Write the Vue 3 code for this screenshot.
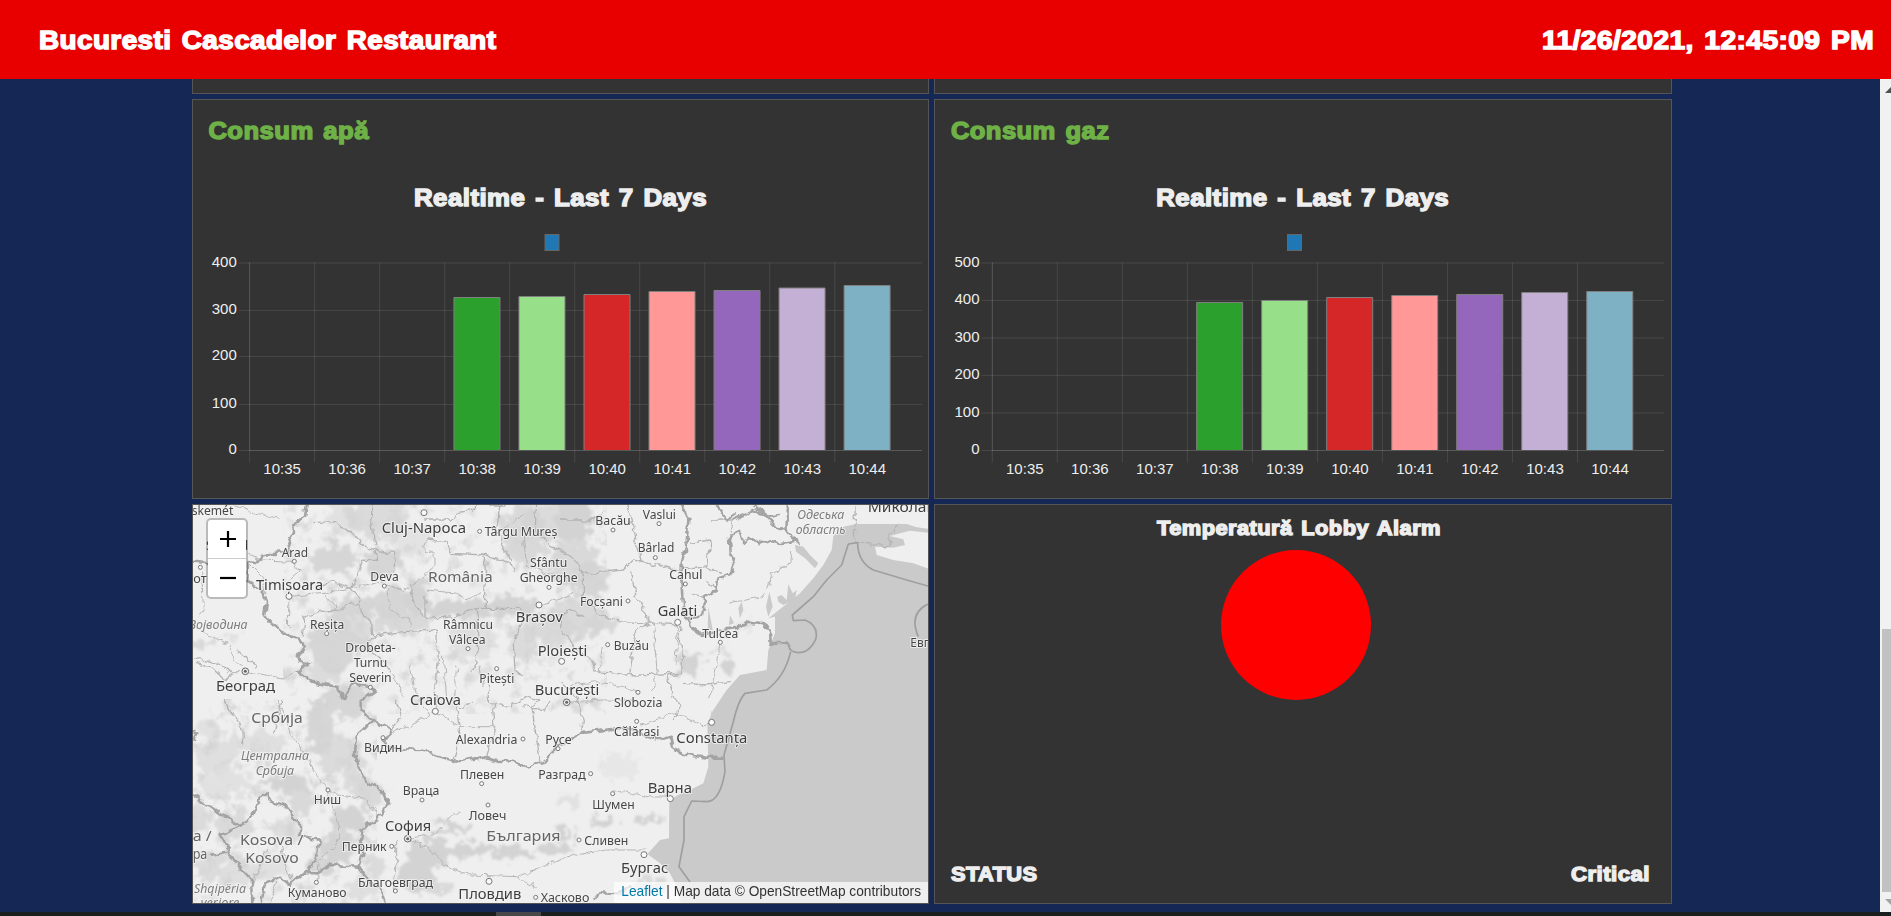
<script setup>
const palette = ['#2ca02c', '#98df8a', '#d62728', '#ff9896', '#9467bd', '#c5b0d5', '#7fb1c5']
const times = ['10:35', '10:36', '10:37', '10:38', '10:39', '10:40', '10:41', '10:42', '10:43', '10:44']

const charts = [
  {
    title: 'Consum apă', titleX: 15.4, titleW: 160.5, width: 735, axis: 56.6, end: 729, headX: 221, legend: 352,
    ticks: [['400', 163], ['300', 210.4], ['200', 256.4], ['100', 304.4], ['0', 350.5]],
    tops: [197.5, 196.5, 194.5, 191.5, 190.5, 188, 185.5]
  },
  {
    title: 'Consum gaz', titleX: 15.9, titleW: 158.5, width: 736, axis: 57.3, end: 729, headX: 221.2, legend: 352.5,
    ticks: [['500', 163], ['400', 200.4], ['300', 238], ['200', 275.4], ['100', 313], ['0', 350.5]],
    tops: [202.5, 200.5, 197.5, 195.5, 194.5, 192.5, 191.5]
  }
]
const step = 65.02

// label, left, right, baseline, style (s = town, l = city, c = country, i = region)
const labels = [
  ['skemét', 5, 130, 46, 's'], ['Szeged', 48, 175, 150, 's'], ['Arad', 275, 354, 170, 's'], ['Timișoara', 198, 400, 270, 'l'],
  ['от', 10, 50, 249, 's'], ['Војводина', -4, 173, 387, 'i'], ['Deva', 541, 626, 243, 's'], ['România', 714, 908, 247, 'c'],
  ['Reșița', 360, 463, 387, 's'], ['Cluj-Napoca', 575, 828, 100, 'l'], ['Târgu Mureș', 884, 1102, 108, 's'],
  ['Sfântu', 1020, 1132, 200, 's'], ['Gheorghe', 989, 1163, 245, 's'], ['Brașov', 977, 1118, 367, 'l'],
  ['Râmnicu', 759, 909, 387, 's'], ['Vâlcea', 777, 887, 431, 's'], ['Drobeta-', 466, 617, 456, 's'], ['Turnu', 491, 592, 501, 's'],
  ['Severin', 478, 605, 546, 's'], ['Београд', 78, 255, 572, 'l'], ['Pitești', 868, 973, 549, 's'], ['Craiova', 660, 813, 616, 'l'],
  ['Ploiești', 1043, 1192, 467, 'l'], ['București', 1034, 1228, 585, 'l'], ['Bacău', 1216, 1322, 76, 's'], ['Vaslui', 1358, 1458, 56, 's'],
  ['Bârlad', 1343, 1453, 157, 's'], ['Cahul', 1438, 1537, 237, 's'], ['Focșani', 1170, 1299, 317, 's'], ['Galați', 1403, 1522, 348, 'l'],
  ['Tulcea', 1537, 1645, 415, 's'], ['Buzău', 1271, 1377, 450, 's'], ['Slobozia', 1272, 1417, 621, 's'], ['Одеська', 1822, 1963, 56, 'i'],
  ['область', 1817, 1967, 101, 'i'], ['Миколаїв', 2033, 2248, 36, 'l'], ['Евпатория', 2161, 2345, 440, 's'], ['Србија', 184, 338, 670, 'c'],
  ['Централна', 153, 357, 781, 'i'], ['Србија', 197, 312, 826, 'i'], ['Ниш', 371, 453, 912, 's'], ['Kosova /', 150, 340, 1035, 'c'],
  ['Kosovo', 166, 326, 1090, 'c'], ['a /', 8, 65, 1022, 'c'], ['ра', 8, 52, 1078, 'c'], ['Shqipëria', 12, 168, 1178, 'i'],
  ['veriore', 32, 148, 1222, 'i'], ['Куманово', 293, 470, 1190, 's'], ['Видин', 522, 637, 757, 's'], ['Alexandria', 797, 982, 732, 's'],
  ['Русе', 1066, 1145, 732, 's'], ['Плевен', 810, 943, 837, 's'], ['Разград', 1045, 1187, 837, 's'], ['Враца', 638, 748, 884, 's'],
  ['Ловеч', 836, 949, 959, 's'], ['София', 585, 724, 994, 'l'], ['Перник', 455, 590, 1052, 's'], ['България', 889, 1112, 1024, 'c'],
  ['Благоевград', 504, 729, 1160, 's'], ['Пловдив', 805, 994, 1196, 'l'], ['Хасково', 1052, 1198, 1205, 's'],
  ['Călărași', 1272, 1408, 709, 's'], ['Constanța', 1459, 1672, 728, 'l'], ['Варна', 1373, 1506, 880, 'l'], ['Шумен', 1207, 1334, 927, 's'],
  ['Сливен', 1183, 1315, 1034, 's'], ['Бургас', 1293, 1435, 1118, 'l']
]

const towns = [
  [313, 184], [31, 202], [583, 258], [410, 401], [869, 94], [1077, 262], [834, 446], [541, 562], [920, 506], [1269, 90], [1407, 71],
  [1396, 173], [1486, 252], [1314, 303], [1591, 427], [1253, 434], [1344, 577], [414, 870], [379, 1147], [579, 713], [999, 717],
  [1104, 746], [875, 851], [1202, 821], [696, 900], [894, 915], [605, 1039], [616, 1173], [1037, 1192], [1340, 664], [1268, 881], [1167, 1020]
]
const cities = [[297, 289], [702, 38], [1047, 315], [736, 634], [1115, 484], [1463, 367], [897, 1144], [1565, 667], [1441, 896], [1362, 1064]]
const capitals = [[166, 514], [1130, 607], [653, 1016]]

// centre x, centre y, radius x, radius y, opacity
const relief = [
  [560, 50, 90, 70, 0.7], [470, 60, 60, 40, 0.5], [430, 180, 70, 42, 0.9], [580, 190, 60, 45, 0.9], [600, 310, 60, 50, 0.9],
  [490, 320, 60, 30, 0.9], [680, 300, 34, 60, 1], [820, 325, 130, 28, 1], [960, 318, 80, 28, 1], [430, 430, 70, 90, 0.9],
  [510, 390, 40, 70, 0.7], [470, 600, 70, 50, 0.9], [400, 520, 60, 30, 0.7], [640, 370, 90, 30, 0.8], [1000, 110, 70, 90, 0.8],
  [1080, 70, 90, 60, 0.7], [1150, 60, 60, 70, 1], [1150, 190, 70, 70, 0.8], [1200, 240, 60, 50, 0.9], [1160, 350, 80, 60, 0.8],
  [1090, 390, 80, 45, 0.8], [1230, 370, 50, 30, 0.8], [1000, 430, 40, 50, 0.7], [850, 420, 70, 60, 0.5], [660, 120, 60, 50, 0.4],
  [40, 432, 40, 9, 0.8], [120, 410, 30, 8, 0.6], [390, 680, 40, 80, 0.9], [440, 760, 60, 60, 0.7], [200, 730, 80, 40, 0.6],
  [80, 770, 60, 50, 0.6], [60, 690, 40, 30, 0.5], [110, 850, 80, 40, 0.5], [290, 850, 60, 28, 1], [330, 900, 40, 50, 0.8],
  [490, 800, 30, 80, 0.7], [540, 880, 40, 50, 0.8], [480, 960, 60, 35, 1], [440, 1040, 50, 50, 1], [290, 990, 50, 30, 0.6],
  [400, 1090, 40, 40, 0.9], [130, 980, 60, 50, 0.7], [60, 1100, 40, 50, 0.7], [140, 1120, 60, 40, 0.6], [250, 1100, 50, 40, 0.5],
  [720, 1060, 70, 40, 1], [680, 1130, 60, 50, 1], [780, 985, 70, 15, 1], [830, 1050, 90, 18, 1], [970, 1060, 60, 18, 1],
  [1090, 1050, 50, 20, 1], [560, 1100, 30, 40, 0.7], [720, 1170, 60, 18, 0.8], [1240, 965, 40, 18, 1], [1380, 960, 45, 12, 1],
  [1120, 1000, 24, 25, 1], [1500, 490, 40, 32, 1], [1615, 495, 20, 26, 1], [1580, 450, 40, 10, 0.6], [1390, 1160, 60, 24, 0.8],
  [1140, 900, 40, 12, 0.5], [1280, 800, 60, 40, 0.3], [1670, 370, 22, 20, 0.6], [520, 1170, 50, 30, 0.6], [30, 950, 30, 40, 0.7]
]

const frontiers = [
  'M350 15 L345 50 310 75 312 100 295 130 300 155 240 160 215 165 205 190 175 185 172 240 215 275 228 300 222 350 270 395 330 420 345 440 325 470 330 485 355 490 325 515 365 545 440 560 460 598 490 550 540 560 555 575 515 600 515 630 545 660 500 710 495 760 515 830 570 870 600 905 560 960 515 985 510 1020 520 1060 505 1100 420 1095 380 1120 340 1120 300 1155 270 1130 225 1150 215 1206',
  'M545 660 L600 690 605 705 580 722 600 745 640 748 690 750 750 770 800 785 880 770 920 782 970 785 1010 800 1060 785 1110 735 1170 700 1250 690 1310 680 1380 712 1408 720 1442 710 1455 748 1490 765 1550 773 1600 773',
  'M1475 15 L1495 55 1490 130 1475 190 1475 260 1480 330 1505 385 1530 402 1630 385 1680 365 1720 370 1740 400 1742 428 1790 430 1800 450',
  'M1790 15 L1790 95 1822 125 1770 132 1735 120 1710 132 1680 110 1660 130 1650 95 1620 110 1622 160 1635 180 1620 225 1585 235 1580 270 1545 290 1540 350 1525 350 1495 355',
  'M1630 60 L1690 30 1720 40 1750 75 1790 95', 'M1580 15 L1610 60 1640 40 M1690 15 L1740 50 1770 45',
  'M9 885 L60 920 150 978 190 950 205 900 230 885 240 905 290 920 330 975 330 1005 390 1020 380 1070 350 1115 300 1155',
  'M150 978 L95 1005 110 1040 130 1080 185 1140 190 1206 M60 1065 L110 1055 M505 1100 L540 1150 570 1160 585 1206 M9 695 L22 700 12 720 M9 185 L55 190',
  'M1205 1195 L1230 1180 1280 1183 1320 1160'
]
const seaLimits = [
  'M2214 258 L2150 240 2050 210 Q2003 185 2003 128 L1975 132 1955 195 1910 240 1870 290 1807 345 1810 362 1845 360 Q1885 375 1878 415 Q1860 458 1825 458 Q1800 455 1800 445 M1802 455 Q1785 530 1730 570 L1665 580 Q1645 600 1630 665 L1602 765 1605 815 Q1590 905 1550 905 L1505 903 1482 950 1482 1020 1467 1100 1500 1146',
  'M2214 312 Q2155 340 2185 410'
]
const counties = [
  'M370 68 L430 65 490 105 520 135 555 150 560 185 520 180 500 240 480 265 510 300 515 340 545 370 548 405 530 440 590 495 600 520',
  'M545 15 L545 70 555 135 M555 150 L610 160 615 215 M390 265 L420 240 480 265 M340 410 L345 350 380 335 450 330 490 310 515 320',
  'M548 405 L640 395 740 390 745 480 735 590 M655 250 L670 300 700 350 M705 355 L800 350 860 325 985 325 1000 350 M705 290 L705 355',
  'M700 60 L780 60 800 40 850 30 860 15 M710 120 L770 125 785 160 885 165 890 220 885 325 M885 165 L960 190 970 215 M930 15 L920 90 960 180',
  'M860 325 L860 490 845 520 M1000 350 L970 430 975 510 1000 530 M1040 15 L1035 90 1080 140 1110 150 1155 180 1170 210 1200 220 1300 210 1330 180 1470 210',
  'M1110 60 L1210 60 1245 30 M1310 15 L1325 60 1340 130 1355 190 M1180 210 L1180 290 1220 340 1290 365 1400 370 1463 375',
  'M1325 215 L1335 290 1370 340 1380 370 1340 395 1330 440 1320 520 M1110 350 L1135 330 1180 350 M1110 350 L1120 400 1160 450 1205 480 1215 515 1340 525 1460 520',
  'M1470 375 L1465 430 1480 440 1475 520 1430 530 1450 590 1470 620 M1480 550 L1550 555 1620 545 M1500 130 L1560 120 1550 200 1480 210',
  'M1560 60 L1630 60 1620 110 M1550 200 L1590 220 M1550 240 L1580 265 M1500 280 L1545 290',
  'M735 590 L740 620 M895 520 L895 610 960 620 1010 590 1050 600 M910 615 L915 680 890 770 M800 620 L810 710 790 780 M1050 600 L1025 620 1035 680 1050 785',
  'M620 600 L635 650 600 690 M1110 550 L1160 590 1180 660 1175 690 M1470 620 L1450 660 M1000 620 L1060 630 1080 600',
  'M9 470 L80 490 130 515 M9 490 L60 500 100 540 130 520 M140 450 L165 470 200 500 M105 600 L130 650 155 680 158 730 M275 600 L262 660 250 700',
  'M1995 15 L1997 128 2100 138 2100 100 2125 75', 'M900 15 L1000 15 M240 1206 L260 1150'
]
const roads = [
  'M130 15 L200 40 265 55 M170 165 L215 180 305 184 313 184 325 215 295 240 297 289 295 390 M297 289 L400 280 500 260 583 245 M583 258 L640 270 710 230 M710 120 L700 140 735 160 735 200 700 230',
  'M710 270 L800 280 830 300 870 275 M175 190 L215 230 225 280 M400 280 L440 330 M590 270 L600 330 660 360 665 380 M35 210 L40 330 9 380 45 400 M45 400 L110 430 135 480 166 505',
  'M166 514 L280 535 330 510 M110 515 L150 515 M265 600 L300 700 360 790 400 850 414 870 440 885 525 895 565 945 M414 870 L430 930 450 985 435 1040 385 1080 379 1147 M270 1030 L305 1145 M230 1050 L180 1170',
  'M605 700 L700 655 736 634 810 680 910 680 M810 630 L850 600 M620 1020 L620 1110 610 1170 M653 1016 L690 1030 740 1065 760 1095 840 1125 980 1130 1060 1100 1130 1070 1250 1050 1362 1050',
  'M653 1016 L740 1000 770 965 805 935 M980 1130 L1040 1160 M1268 872 L1330 880 1370 890 1441 892 M1130 607 L1240 600 1330 600 M1350 675 L1440 645 1460 630 M1450 635 L1540 675 1565 667',
  'M1340 577 L1300 560 1220 545 1140 555 M1463 367 L1455 490 M1590 430 L1580 500 1555 600 M1805 150 L1803 185 1745 220 1740 250 1720 290 1610 310 M1240 440 L1230 520 M1390 370 L1400 500 1390 570',
  'M1000 110 L1010 200 1100 230 M1047 315 L1100 300 1150 280 M936 90 L1000 40 M660 500 L680 590 720 640 M760 470 L770 600 M610 520 L640 590 M800 500 L790 600 M870 500 L880 560'
]
</script>

<template>
  <div class="page">
    <header class="bar">
      <svg width="458" height="30" class="heavy bright"><text x="0" y="24" font-size="25" textLength="457.5" lengthAdjust="spacingAndGlyphs">Bucuresti Cascadelor Restaurant</text></svg>
      <svg width="333" height="30" class="heavy bright"><text x="0" y="24" font-size="25" textLength="332" lengthAdjust="spacingAndGlyphs">11/26/2021, 12:45:09 PM</text></svg>
    </header>

    <div class="body">
      <main class="grid">
        <div class="card stub"></div>
        <div class="card stub"></div>

        <section v-for="c in charts" :key="c.title" class="card">
          <svg :width="c.width" height="398">
            <text class="heavy green" :x="c.titleX" y="38.5" font-size="23.7" :textLength="c.titleW" lengthAdjust="spacingAndGlyphs">{{ c.title }}</text>
            <text class="heavy" :x="c.headX" y="105.8" font-size="23.7" textLength="293" lengthAdjust="spacingAndGlyphs">Realtime - Last 7 Days</text>
            <rect :x="c.legend" y="134.5" width="14" height="16" fill="#1f77b4" stroke="#666" />
            <g stroke="#fff" stroke-opacity=".1">
              <line v-for="t in c.ticks" :key="t[0]" :x1="c.axis - 11" :x2="c.end" :y1="t[1]" :y2="t[1]" />
              <line v-for="(t, i) in times" :key="t" :x1="c.axis + i * step" :x2="c.axis + i * step" y1="162.5" y2="362.5" />
              <line :x1="c.axis" :x2="c.axis" y1="162.5" y2="351" />
              <line :x1="c.axis" :x2="c.end" y1="350.5" y2="350.5" />
            </g>
            <g v-for="(top, i) in c.tops" :key="i">
              <rect :x="c.axis + 9.3 + (i + 3) * step" :y="top" width="46" :height="350 - top" :fill="palette[i]" />
              <path :d="`M${c.axis + 9.3 + (i + 3) * step} 350V${top}h46V350`" fill="none" stroke="#808080" />
            </g>
            <g class="axis">
              <text v-for="t in c.ticks" :key="t[0]" :x="c.axis - 12.8" :y="Math.round(t[1] + 3.7)" text-anchor="end">{{ t[0] }}</text>
              <text v-for="(t, i) in times" :key="t" :x="c.axis + (i + .5) * step" y="373.6" text-anchor="middle">{{ t }}</text>
            </g>
          </svg>
        </section>

        <section class="card map">
          <svg width="735" height="398" viewBox="193 505 735 398">
            <defs>
              <filter id="rough" x="-5%" y="-5%" width="110%" height="110%" color-interpolation-filters="sRGB">
                <feTurbulence type="fractalNoise" baseFrequency=".035" numOctaves="4" seed="4" result="n" />
                <feDisplacementMap in="SourceGraphic" in2="n" scale="75" xChannelSelector="R" yChannelSelector="G" />
                <feGaussianBlur stdDeviation="3.5" />
              </filter>
              <filter id="wavy" x="-5%" y="-5%" width="110%" height="110%" color-interpolation-filters="sRGB">
                <feTurbulence type="fractalNoise" baseFrequency=".04" numOctaves="2" seed="8" result="n" />
                <feDisplacementMap in="SourceGraphic" in2="n" scale="24" xChannelSelector="R" yChannelSelector="G" />
                <feGaussianBlur stdDeviation=".9" />
              </filter>
              <filter id="grain" x="0" y="0" width="100%" height="100%" color-interpolation-filters="sRGB">
                <feTurbulence type="fractalNoise" baseFrequency=".022" numOctaves="4" seed="12" />
                <feColorMatrix values="0 0 0 0 .8  0 0 0 0 .8  0 0 0 0 .8  3.4 0 0 0 -1.75" />
              </filter>
            </defs>
            <rect x="190" y="500" width="745" height="410" fill="#efefef" />
            <g transform="translate(190 500) scale(.33333)">
              <rect x="280" y="0" width="970" height="640" filter="url(#grain)" opacity=".6" />
              <rect x="0" y="600" width="560" height="620" filter="url(#grain)" opacity=".7" />
              <g filter="url(#rough)" fill="#d3d3d3">
                <ellipse v-for="(r, i) in relief" :key="i" :cx="r[0]" :cy="r[1]" :rx="r[2]" :ry="r[3]" :opacity="r[4]" />
              </g>
              <path fill="#cacaca" d="M2220 208 L2170 190 2110 180 2060 165 2055 140 2110 143 2145 135 2140 118 2100 108 2160 92 2214 98 V86 L2180 82 2150 72 2000 72 1960 80 1930 108 1925 150 1900 195 1870 235 1830 280 1790 312 1735 355 1755 350 1755 400 1735 450 1730 510 1650 525 1610 570 1570 630 1565 640 1552 672 1555 800 1540 850 1510 865 1465 885 1438 900 1437 1015 1410 1020 1372 1062 1410 1090 1440 1120 1460 1160 1475 1220 H2220Z" />
              <path fill="#cacaca" d="M1815 135 L1840 140 1860 165 1885 190 1875 205 1845 175 1818 155Z M1735 350 L1728 320 1738 275 1748 320Z M1765 305 L1762 290 1775 285 1790 300 1795 252 1808 280 1820 270 1815 300 1780 315Z M1617 375 L1620 345 1632 370Z M1553 390 L1555 320 1568 390Z M1650 355 L1645 325 1655 305 1660 330Z M1565 632 L1570 640 1562 644Z" />
              <g filter="url(#wavy)" fill="none" stroke-linejoin="round">
                <path v-for="d in roads" :key="d" :d="d" stroke="#b6b6b6" stroke-width="3" />
                <path v-for="d in counties" :key="d" :d="d" stroke="#b4b4b4" stroke-width="4" />
                <path v-for="d in frontiers" :key="d" :d="d" stroke="#a3a3a3" stroke-width="7.5" />
              </g>
              <path v-for="d in seaLimits" :key="d" :d="d" fill="none" stroke="#9f9f9f" stroke-width="5" stroke-linejoin="round" />
              <g fill="#fafafa" stroke="#777" stroke-width="3">
                <circle v-for="(p, i) in towns" :key="i" :cx="p[0]" :cy="p[1]" r="6" />
                <circle v-for="(p, i) in cities" :key="i" :cx="p[0]" :cy="p[1]" r="9" />
              </g>
              <g v-for="(p, i) in capitals" :key="i">
                <circle :cx="p[0]" :cy="p[1]" r="10" fill="#eee" stroke="#666" stroke-width="3" />
                <circle :cx="p[0]" :cy="p[1]" r="4.5" fill="#666" />
              </g>
              <text v-for="(l, i) in labels" :key="i" class="place" :class="l[4]" :x="l[1]" :y="l[3]" :textLength="l[2] - l[1]" lengthAdjust="spacingAndGlyphs">{{ l[0] }}</text>
            </g>
          </svg>
          <div class="zoom">
            <button aria-label="Zoom in"><svg width="16" height="16"><path d="M0 8h16M8 0v16" stroke="#000" stroke-width="2.2" /></svg></button>
            <button aria-label="Zoom out"><svg width="16" height="16"><path d="M0 8h16" stroke="#000" stroke-width="2.2" /></svg></button>
          </div>
          <div class="credit"><span class="link">Leaflet</span> | Map data © OpenStreetMap contributors</div>
        </section>

        <section class="card alarm">
          <svg width="286" height="30" class="heavy title"><text x="0" y="20" font-size="20.5" textLength="284" lengthAdjust="spacingAndGlyphs">Temperatură Lobby Alarm</text></svg>
          <div class="lamp"></div>
          <div class="status">
            <svg width="88" height="24" class="heavy"><text x="0" y="20" font-size="20.5" textLength="86.5" lengthAdjust="spacingAndGlyphs">STATUS</text></svg>
            <svg width="80" height="24" class="heavy"><text x="0" y="20" font-size="20.5" textLength="79" lengthAdjust="spacingAndGlyphs">Critical</text></svg>
          </div>
        </section>
      </main>

      <div class="scroll">
        <svg width="11" height="20"><path d="M5 14l6-6v6z" fill="#505050" /></svg>
        <div class="thumb"></div>
        <svg width="11" height="20"><path d="M5 7h6v6z" fill="#a3a3a3" /></svg>
      </div>
    </div>

    <footer class="dock"><div class="tab"></div></footer>
  </div>
</template>

<style>
html, body { margin: 0; overflow: hidden; background: #152754; }
</style>

<style scoped>
.page { width: 1891px; height: 916px; display: flex; flex-direction: column; overflow: hidden; background: #152754; font-family: "Liberation Sans", Arial, sans-serif; }
svg { display: block; flex: none; }
.heavy { font-family: "Liberation Sans", Arial, sans-serif; font-weight: 700; word-spacing: 2px; letter-spacing: .4px; fill: #eee; stroke: #eee; stroke-width: 1.4px; overflow: visible; }
.heavy.bright { fill: #fff; stroke: #fff; }
.heavy.green { fill: #6eb146; stroke: #6eb146; }
.bar { height: 79px; flex: none; box-sizing: border-box; background: #e80000; display: flex; justify-content: space-between; padding: 25px 16px 0 39px; }
.body { height: 833px; display: flex; justify-content: space-between; }
.grid { margin-left: 192px; display: grid; grid-template-columns: 737px 738px; grid-template-rows: 15px 400px 400px; gap: 5px; }
.card { box-sizing: border-box; border: 1px solid #555; background: #333; overflow: hidden; }
.stub { border-top: 0; }
.axis { font: 15px "Liberation Sans", Arial, sans-serif; fill: #eee; }
.map { position: relative; }
.place { font-family: "Noto Sans", sans-serif; font-size: 38px; fill: #474747; stroke: #f3f3f3; stroke-opacity: .8; stroke-width: 6px; stroke-linejoin: round; paint-order: stroke; }
.place.l { font-size: 45px; fill: #3e3e3e; }
.place.c { font-size: 44px; fill: #656565; }
.place.i { font-size: 37px; font-style: italic; fill: #7d7d7d; }
.zoom { position: absolute; left: 13px; top: 13px; width: 38px; border: 2px solid rgba(0, 0, 0, .22); border-radius: 5px; background: #fff; background-clip: padding-box; }
.zoom button { box-sizing: border-box; width: 38px; height: 38px; padding: 0 0 0 1px; border: 0; background: none; display: flex; align-items: center; justify-content: center; }
.zoom button:first-child { height: 39px; border-bottom: 1px solid #ccc; }
.credit { position: absolute; right: 0; bottom: 0; height: 21px; line-height: 19px; padding: 0 7px; font-size: 13.72px; color: #333; background: rgba(255, 255, 255, .7); white-space: nowrap; }
.link { color: #0078a8; }
.alarm { display: flex; flex-direction: column; align-items: center; }
.title { margin: 10px 6px 0 0; }
.lamp { width: 150px; height: 150px; margin: 5px 14px 0 0; border-radius: 50%; background: #f00; }
.status { align-self: stretch; margin: auto 20px 18px 16px; display: flex; justify-content: space-between; }
.scroll { width: 11px; background: #f1f1f1; display: flex; flex-direction: column; }
.thumb { width: 9px; height: 263px; margin: auto 0 0 2px; background: #c1c1c1; }
.dock { height: 4px; background: #1c1d1f; display: flex; padding-left: 496px; }
.tab { width: 45px; background: #474747; }
</style>
